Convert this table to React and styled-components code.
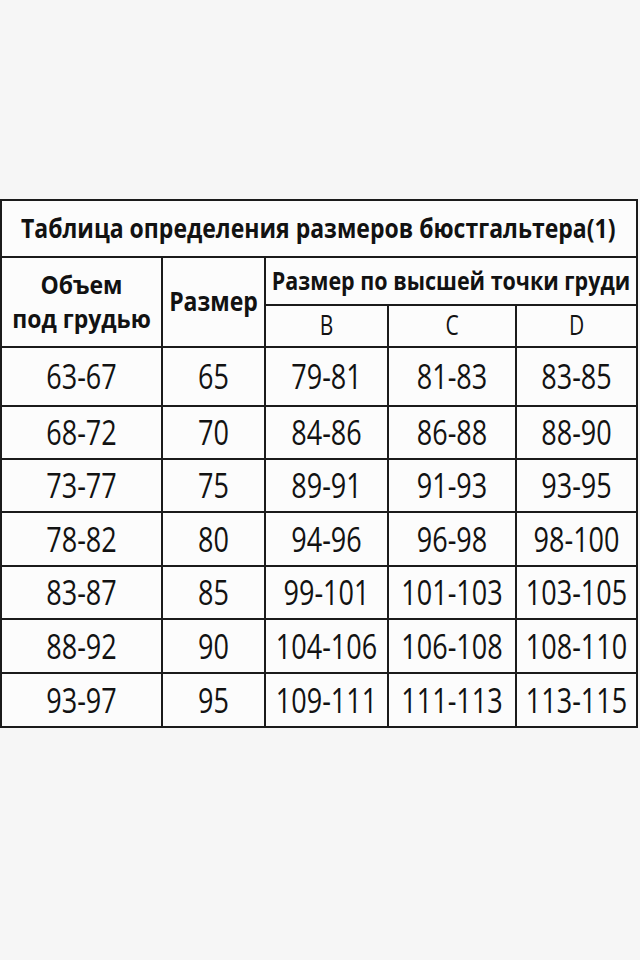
import React from 'react';
import styled, { createGlobalStyle } from 'styled-components';

const GlobalStyle = createGlobalStyle`
  html, body {
    margin: 0;
    padding: 0;
    background: #f6f6f6;
  }
  body {
    font-family: "Open Sans", "Noto Sans", sans-serif;
    color: #121212;
  }
`;

const Page = styled.div`
  width: 640px;
  height: 960px;
  padding-top: 199px;
  box-sizing: border-box;
  background: #f6f6f6;
`;

const Table = styled.table`
  border-collapse: collapse;
  width: 638px;
  margin-left: 0;
  table-layout: fixed;
  background: #fcfcfc;

  td {
    border: 2px solid #1b1b1b;
    padding: 0;
    text-align: center;
    vertical-align: middle;
  }
`;

// text in the picture is drawn taller than the font's natural proportions
const Stretch = styled.span`
  display: inline-block;
  transform: scaleY(${({ sy }) => sy || 1.3});
  font-size: ${({ size }) => size || 27}px;
  font-weight: ${({ bold }) => (bold ? 700 : 400)};
  letter-spacing: ${({ spacing }) => spacing || 0}px;
  line-height: ${({ lh }) => lh || 1.2};
  white-space: nowrap;
`;

const TitleCell = styled.td`
  height: 55px;
  text-align: left !important;
  padding-left: 19px !important;
`;

const HeadCell = styled.td`
  height: ${({ h }) => h}px;
`;

const DataRow = styled.tr`
  td {
    height: ${({ h }) => h}px;
  }
`;

const rows = [
  ['63-67', '65', '79-81', '81-83', '83-85'],
  ['68-72', '70', '84-86', '86-88', '88-90'],
  ['73-77', '75', '89-91', '91-93', '93-95'],
  ['78-82', '80', '94-96', '96-98', '98-100'],
  ['83-87', '85', '99-101', '101-103', '103-105'],
  ['88-92', '90', '104-106', '106-108', '108-110'],
  ['93-97', '95', '109-111', '111-113', '113-115'],
];

const rowHeights = [57, 51, 51, 52, 51, 52, 52];

export default function App() {
  return (
    <>
      <GlobalStyle />
      <Page>
        <Table>
          <colgroup>
            <col style={{ width: 161 }} />
            <col style={{ width: 103 }} />
            <col style={{ width: 123 }} />
            <col style={{ width: 128 }} />
            <col style={{ width: 121 }} />
          </colgroup>
          <tbody>
            <tr>
              <TitleCell colSpan={5}>
                <Stretch bold size={23} sy={1.16}>
                  Таблица определения размеров бюстгальтера(1)
                </Stretch>
              </TitleCell>
            </tr>
            <tr>
              <HeadCell rowSpan={2} h={88}>
                <Stretch bold size={23} sy={1.12} lh={1.3}>
                  Объем
                  <br />
                  под грудью
                </Stretch>
              </HeadCell>
              <HeadCell rowSpan={2} h={88}>
                <Stretch bold size={23} sy={1.15}>
                  Размер
                </Stretch>
              </HeadCell>
              <HeadCell colSpan={3} h={46}>
                <Stretch bold size={21.5} sy={1.18}>
                  Размер по высшей точки груди
                </Stretch>
              </HeadCell>
            </tr>
            <tr>
              <HeadCell h={40}>
                <Stretch size={21}>B</Stretch>
              </HeadCell>
              <HeadCell h={40}>
                <Stretch size={21}>C</Stretch>
              </HeadCell>
              <HeadCell h={40}>
                <Stretch size={21}>D</Stretch>
              </HeadCell>
            </tr>
            {rows.map((r, i) => (
              <DataRow key={r[0]} h={rowHeights[i]}>
                {r.map((v, j) => (
                  <td key={j}>
                    <Stretch>{v}</Stretch>
                  </td>
                ))}
              </DataRow>
            ))}
          </tbody>
        </Table>
      </Page>
    </>
  );
}
